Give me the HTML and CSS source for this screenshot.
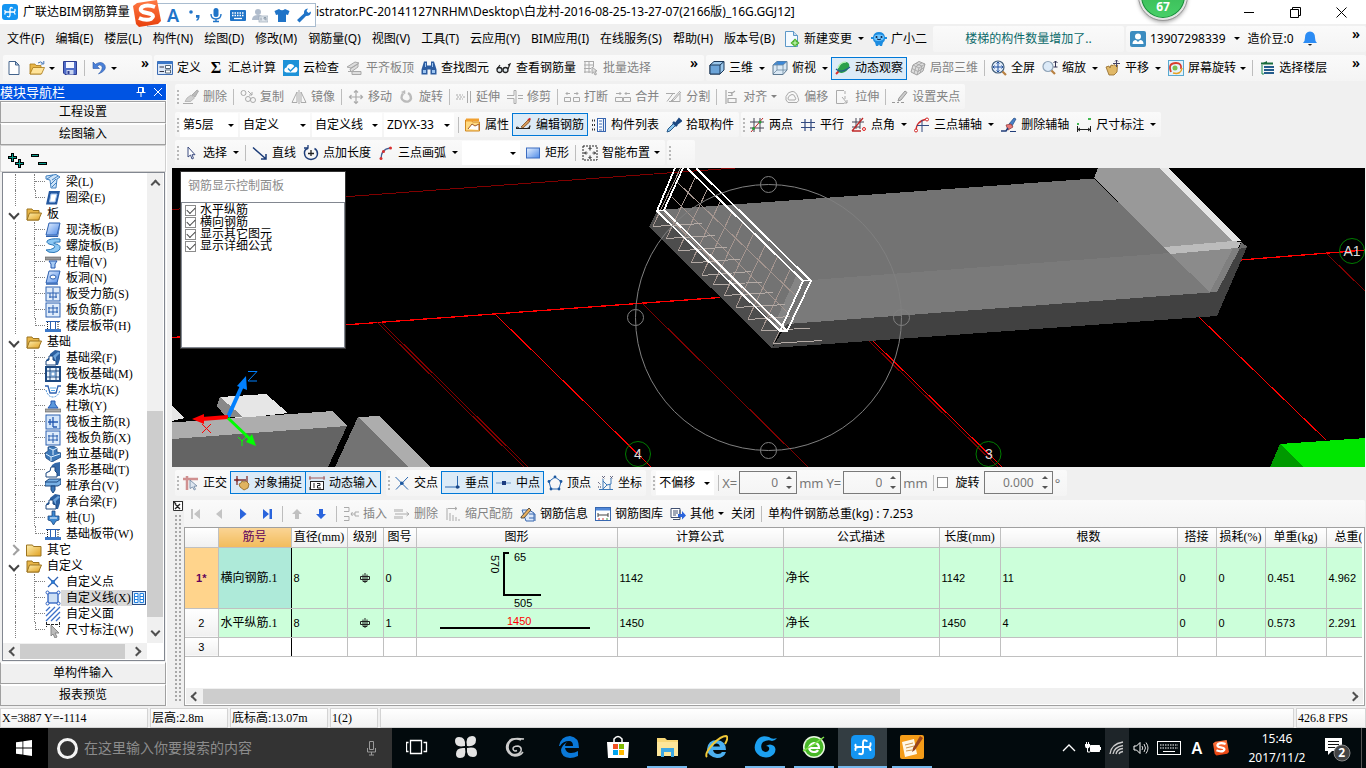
FILE: index.html
```html
<!DOCTYPE html>
<html lang="zh-CN">
<head>
    <meta charset="UTF-8">
    <meta name="viewport" content="width=device-width, initial-scale=1.0">
    <title>广联达BIM钢筋算量</title>
    <link rel="stylesheet" href="styles.css">
</head>
<body>
    <!-- icon sprite -->
    <svg class="sprite" aria-hidden="true">
        <defs>
            <linearGradient id="blueG" x1="0" y1="0" x2="1" y2="1"><stop offset="0" stop-color="#e8f2ff"/><stop offset="1" stop-color="#4d8ae8"/></linearGradient>
            <linearGradient id="goldG" x1="0" y1="0" x2="1" y2="1"><stop offset="0" stop-color="#fff0b0"/><stop offset="1" stop-color="#e0a020"/></linearGradient>
            <linearGradient id="sogouG" x1="0" y1="0" x2="0" y2="1"><stop offset="0" stop-color="#ff7a45"/><stop offset="1" stop-color="#e8400c"/></linearGradient>
        </defs>
        <symbol id="i-app" viewBox="0 0 16 16"><rect width="16" height="16" rx="3" fill="#1495f2"/><path d="M10.500 4Q8 2.500 8 5.500v5.500q0 2.500-2.500 1.500M3 10q-.5-2 2-2h6q2.500 0 2-2.500M3 6.500q-.5 1.500 1.500 1.500M13 10q-.3-2-2-2" fill="none" stroke="#fff" stroke-width="1.300" stroke-linecap="round"/></symbol>
        <symbol id="i-new" viewBox="0 0 16 16"><path d="M3 1.500h6.500L13 5v9.500H3z" fill="#fff" stroke="#44648c"/><path d="M9.500 1.500V5H13z" fill="#b8cce8" stroke="#44648c"/></symbol>
        <symbol id="i-open" viewBox="0 0 16 16"><path d="M1 4h5l1 1.500h5V14H1z" fill="#e8b648" stroke="#a87818" stroke-width=".8"/><path d="M4 7.500h11.500L12.500 14H1z" fill="#ffe49a" stroke="#a87818" stroke-width=".8"/><path d="M9 3q3-2.500 5 .5M14.800 1v3h-3" fill="none" stroke="#4878b8"/></symbol>
        <symbol id="i-save" viewBox="0 0 16 16"><path d="M1.500 1.500h13v13H3L1.500 13z" fill="#4f6cc8" stroke="#2c3c90"/><rect x="4" y="2" width="8" height="6" fill="#f4f6ff"/><rect x="4.500" y="10" width="7" height="4.500" fill="#c8d4f0"/><rect x="5.500" y="11" width="2" height="3" fill="#2c3c90"/></symbol>
        <symbol id="i-undo" viewBox="0 0 16 16"><path d="M2 2v6.500h6.500L6 6.200Q9 3.800 10.800 6 12.500 9 7.500 14 16 10.500 14 5.500 11 0 4.300 4.300z" fill="#4a80d8" stroke="#2858a8" stroke-width=".6"/></symbol>
        <symbol id="i-define" viewBox="0 0 16 16"><path d="M.5 1.500h15v13H.5z" fill="#dce8f8" stroke="#3c6cb4"/><path d="M.5 1.500h15v2.500H.5z" fill="#3c78c8"/><path d="M2.500 7H7M2.500 11.500H7" stroke="#334"/><path d="M8.500 5.500h5v3h-5zM8.500 10h5v3h-5z" fill="#fff" stroke="#567"/></symbol>
        <symbol id="i-cloud" viewBox="0 0 16 16"><rect width="16" height="16" fill="#1d92d8"/><path d="M3.500 12.500q-3-.5-2-3.500.5-1.500 2-1.500Q4.500 3.500 8 4q2.500 0 3.500 2.500 3.500 0 3 3.500-.5 2-2 2.500z" fill="#fff"/><path d="M5 8.500l2.500 2.500L13 5.500" fill="none" stroke="#1d92d8" stroke-width="1.500"/></symbol>
        <symbol id="i-slab" viewBox="0 0 16 16"><path d="M1 7l8-5 4 1-8 5zM4 9l8-5v3l-7 5z" fill="#ddd" stroke="#a8a8a8"/><path d="M2 11.500h13v3H6V12" fill="#ddd" stroke="#a8a8a8"/></symbol>
        <symbol id="i-find" viewBox="0 0 16 16"><path d="M3 1.500h3v4h4v-4h3l2.500 8v5h-6v-5h-3v5H.5v-5z" fill="#2c5ca0"/><path d="M2 10h3v3H2zM11 10h3v3h-3zM4 3h1v4H4zM11 3h1v4h-1z" fill="#9cc4f0"/></symbol>
        <symbol id="i-glasses" viewBox="0 0 16 16"><circle cx="3.500" cy="10" r="2.500" fill="#dfe8ee" stroke="#222" stroke-width="1.300"/><circle cx="9.500" cy="10" r="2.500" fill="#dfe8ee" stroke="#222" stroke-width="1.300"/><path d="M1 9l3-4M12 9l2-5-2 1" fill="none" stroke="#222" stroke-width="1.200"/></symbol>
        <symbol id="i-batch" viewBox="0 0 16 16"><path d="M1 1.500h10M1 5h10M1 8.500h7M1 12h7M2 1v12M6 1v12M10.500 1v6" stroke="#aaa" fill="none"/><path d="M9 7l5 4-2 .3 1.500 3-1.500.7-1.400-3L9 13.500z" fill="#ddd" stroke="#999" stroke-width=".8"/></symbol>
        <symbol id="i-cube" viewBox="0 0 16 16"><path d="M1 5l4-3.500h10V10l-4 4H1z" fill="#9cc8ec" stroke="#1c3858"/><path d="M1 5h10v9H1z" fill="#6ca4d8" stroke="#1c3858"/><path d="M11 5l4-3.500" stroke="#1c3858"/></symbol>
        <symbol id="i-cubetop" viewBox="0 0 16 16"><path d="M1 5l4-3.500h10V10l-4 4.500H1z" fill="#dbe9f5" stroke="#5c7890"/><path d="M1 5l4-3.500h10L11 5z" fill="#3c88d8"/><path d="M1 5h10v9.500M11 5l4-3.500M5 2v8l-4 4M5 10h10" fill="none" stroke="#6c88a0" stroke-width=".8"/></symbol>
        <symbol id="i-orbit" viewBox="0 0 16 16"><path d="M1 14L7 8" stroke="#d8302c" stroke-width="2"/><ellipse cx="8.500" cy="7.500" rx="6.500" ry="4.500" transform="rotate(-40 8.500 7.500)" fill="#2ca04c"/><path d="M3 8q2-6 8-6" fill="none" stroke="#b4f0b4" stroke-width="1.500"/><path d="M1 9q5 5 14-2" stroke="#245c8c" fill="none" stroke-width="1.200"/></symbol>
        <symbol id="i-rubik" viewBox="0 0 16 16"><path d="M3 5l6-3.500 6 2.500-2 7-6 4-6-3z" fill="#ddd" stroke="#a0a0a0"/><path d="M3 5l6 3 6-4M9 8l-2 7M2 8.500l6 3 6-4M6 3.500l6 2.700-2 7M12 2.800L6 6.500 4 13.500" fill="none" stroke="#a0a0a0" stroke-width=".8"/></symbol>
        <symbol id="i-full" viewBox="0 0 16 16"><circle cx="7" cy="7" r="6" fill="#e4eefa" stroke="#44607c" stroke-width="1.200"/><path d="M7 2v10M2 7h10M5.500 3.500L7 2l1.500 1.500M5.500 10.500L7 12l1.500-1.500M3.500 5.500L2 7l1.500 1.500M10.500 5.500L12 7l-1.500 1.500" stroke="#2050a0" fill="none"/><path d="M11.500 11.500l3.500 3.500" stroke="#b88040" stroke-width="2.200"/></symbol>
        <symbol id="i-zoom" viewBox="0 0 16 16"><circle cx="6" cy="6.500" r="5" fill="#dceaf8" stroke="#90a4b8" stroke-width="1.200"/><path d="M9.500 10.500L13 14" stroke="#b88040" stroke-width="2.200"/><path d="M13.500 1v6M11.500 3l2-2 2 2M11.500 7h4" stroke="#335" fill="none"/></symbol>
        <symbol id="i-pan" viewBox="0 0 16 16"><path d="M1 7l3-1 1 2 1-3 2 .5 1-1 1.500 1 2-.5L12 12l-3 3H4z" fill="#e0b868" stroke="#906828" stroke-width=".8"/><path d="M11.500 0v7M8 3.500h7M10 1.500L11.500 0 13 1.500" stroke="#446" fill="none"/></symbol>
        <symbol id="i-screen" viewBox="0 0 16 16"><rect x=".5" y=".5" width="15" height="15" fill="#e4f2fa" stroke="#58a8d0"/><path d="M3 12Q-.5 3 8 3q6 0 5 6" fill="none" stroke="#d83c2c" stroke-width="1.800"/><path d="M5 13q8 2 9-5" fill="none" stroke="#e8a020" stroke-width="1.500"/><circle cx="7" cy="8" r="2.500" fill="#78c050"/></symbol>
        <symbol id="i-floors" viewBox="0 0 16 16"><path d="M2 4l6-3v3z" fill="#1a6c3c"/><path d="M2 3.500h12" stroke="#1a6c3c" stroke-width="2"/><path d="M5 7h10M5 10h10M5 13h10" stroke="#245c8c" stroke-width="1.800"/><path d="M3 5v9h2" stroke="#1a8c4c" fill="none"/></symbol>
        <!-- edit strip, greyed -->
        <symbol id="i-del" viewBox="0 0 16 16"><path d="M9 6l5-5 1.500 1L12 8z" fill="#bbb" stroke="#999" stroke-width=".7"/><path d="M4 9l4-3 3.500 3-4 3.500H2z" fill="#d0d0d0" stroke="#aaa" stroke-width=".7"/><path d="M0 14.500h10" stroke="#aaa"/></symbol>
        <symbol id="i-copy" viewBox="0 0 16 16" fill="none" stroke="#aaa"><circle cx="3.500" cy="4" r="2.500"/><circle cx="8" cy="10" r="2.500"/><circle cx="13" cy="11" r="2.500"/><path d="M8 2l4 4M12 3v3H9"/></symbol>
        <symbol id="i-mirror" viewBox="0 0 16 16" fill="none" stroke="#aaa"><path d="M1 13.500L6 3v10.500zM15 13.500L10 3v10.500zM8 1v14"/></symbol>
        <symbol id="i-move" viewBox="0 0 16 16" fill="none" stroke="#aaa" stroke-width="1.200"><path d="M8 1.500v13M1.500 8h13M6 3.500l2-2 2 2M6 12.500l2 2 2-2M3.500 6l-2 2 2 2M12.500 6l2 2-2 2"/></symbol>
        <symbol id="i-rotate" viewBox="0 0 16 16" fill="none" stroke="#bbb" stroke-width="2.400"><path d="M4 4.500q-3.500 5 1 7.500 5.500 2 7-2.500 0-4-3-5.500"/><path d="M6 5V1.500L2.500 3z" fill="#bbb" stroke-width=".5"/></symbol>
        <symbol id="i-extend" viewBox="0 0 16 16" fill="none" stroke="#aaa"><path d="M0 6h7M0 10h7M1 8h9" stroke-dasharray="2 1"/><path d="M11.500 2v12M14.500 2v12"/></symbol>
        <symbol id="i-trim" viewBox="0 0 16 16" fill="none" stroke="#aaa"><path d="M0 6.500h7v-5h2v13H7v-5H0M11 6.500h5M11 9.500h5"/></symbol>
        <symbol id="i-break" viewBox="0 0 16 16" fill="none" stroke="#aaa"><path d="M2 4.500h4M10 4.500h4M3.500 3L2 4.500 3.500 6M12.500 3L14 4.500 12.500 6M.5 8.500h6v4h-6zM15.500 8.500h-6v4h6z"/></symbol>
        <symbol id="i-merge" viewBox="0 0 16 16" fill="none" stroke="#aaa"><path d="M1 4.500h5M10 4.500h5M4.500 3L6 4.500 4.500 6M11.500 3L10 4.500 11.500 6M.5 8.500h7v4h-7zM15.500 8.500h-7v4h7z"/></symbol>
        <symbol id="i-split" viewBox="0 0 16 16" fill="none" stroke="#aaa"><path d="M0 4.500h9M1 12.500l6-8M3 12.500h11v-8M14 2L7 10l-2 2 3-1 7-8"/></symbol>
        <symbol id="i-align" viewBox="0 0 16 16" fill="none" stroke="#aaa" stroke-width="1.200"><path d="M3 1v14M5 3.500h4v3H5M5 9.500h8v4H5zM12 2L8 5"/></symbol>
        <symbol id="i-offset" viewBox="0 0 16 16" fill="none" stroke="#aaa"><path d="M4 13.500h9q3-2 1-5Q12 2 8 2.500q-4 0-6 5-1 4 2 6z"/><path d="M5 11h6q1.500-1 0-3-1-3-3-2.500Q5 6 4 9q0 2 1 2z"/></symbol>
        <symbol id="i-stretch" viewBox="0 0 16 16" fill="none" stroke="#aaa"><path d="M9 1.500H1.500v13H9"/><path d="M10 2v3M10 7v3M7 8l5 6M12 11v3H9"/></symbol>
        <symbol id="i-grip" viewBox="0 0 16 16" fill="none" stroke="#999"><path d="M0 13.500h7M9 13.500h3" stroke-dasharray="3 2"/><path d="M7 9l6-7 2 1.500L9 11l-3 1z" fill="#ccc"/></symbol>
        <!-- component strip -->
        <symbol id="i-prop" viewBox="0 0 16 16"><path d="M.5 3h6l1 2h7v9H.5z" fill="#ffd980" stroke="#d08820"/><path d="M1 1.500h13v3H1z" fill="#f0a030"/><path d="M3 12l4-5 3 2 4-2v6" fill="#fff" stroke="#a05828"/></symbol>
        <symbol id="i-edit" viewBox="0 0 16 16"><path d="M0 11.500h14M0 11.500q1-3 3 0M11 11.500q3 0 3-3" fill="none" stroke="#222" stroke-width="1.200"/><path d="M5 10l7-7 2-.5-.5 2.500L7 11z" fill="#d49a5c" stroke="#704010" stroke-width=".7"/><path d="M12 3l2.500-1.500" stroke="#d02020" stroke-width="2"/></symbol>
        <symbol id="i-list" viewBox="0 0 16 16"><path d="M1 3.500h3M1 8h3M1 12.500h3" stroke="#333" stroke-width="2" stroke-dasharray="1 1"/><rect x="6.500" y="1.500" width="8" height="13" fill="#fff" stroke="#3866b0"/><path d="M8 4h3M8 7h3M8 10h3M8 13h3M12.500 2v12" stroke="#3866b0" stroke-width="1.200"/></symbol>
        <symbol id="i-pick" viewBox="0 0 16 16"><path d="M1 15l1-3 6-6 2 2-6 6z" fill="#8cc8f0" stroke="#285888"/><path d="M7 5l4 4" stroke="#1c4880" stroke-width="2.500"/><path d="M10 6l3-4 2 2-4 3z" fill="#245ca8" stroke="#1c4880" stroke-width="2"/></symbol>
        <symbol id="i-ax2" viewBox="0 0 16 16"><path d="M5 1v14M11 1v14M1 5h14M1 11h14" stroke="#445"/><path d="M2 15L14 1" stroke="#c02828"/><circle cx="4.500" cy="11.500" r="1.500" fill="#28a038"/><circle cx="11" cy="5" r="1.500" fill="#28a038"/></symbol>
        <symbol id="i-par" viewBox="0 0 16 16"><path d="M5 2v12M11 2v12M1 5.500h14M1 10.500h14" stroke="#334a80" stroke-width="1.200"/></symbol>
        <symbol id="i-angle" viewBox="0 0 16 16"><path d="M5 1v11M9 1v11M1 5h12M1 10h8" stroke="#445"/><path d="M1 14L12 1M1 14h9" stroke="#c02828" stroke-width="1.300"/><circle cx="13" cy="12" r="1.500" fill="none" stroke="#e02020"/></symbol>
        <symbol id="i-arc3" viewBox="0 0 16 16"><path d="M2 14Q2 4 13 2" fill="none" stroke="#d02828" stroke-width="1.300"/><path d="M8 3v12M3 8.500h12" stroke="#334a80"/><circle cx="2" cy="13.500" r="1.500" fill="#fff" stroke="#d02828"/><circle cx="13" cy="2.500" r="1.500" fill="#fff" stroke="#d02828"/></symbol>
        <symbol id="i-delax" viewBox="0 0 16 16"><path d="M8 7l5-6 2 1-4 7z" fill="#4880c8" stroke="#204880" stroke-width=".7"/><path d="M5 8l5-1 2 3-5 3z" fill="#e87878" stroke="#883030" stroke-width=".7"/><path d="M0 14h5l2-3" stroke="#203c78" fill="none" stroke-width="1.600"/><path d="M9 14.500h6" stroke="#203c78"/></symbol>
        <symbol id="i-dim" viewBox="0 0 16 16"><path d="M1.500 9v6M14.500 9v6M2 12.500h12M4 11l-2 1.500L4 14M12 11l2 1.500L12 14" stroke="#222" fill="none"/><path d="M1 6h2v2H1zM12 1h3v2h-3z" fill="#40b850"/></symbol>
        <!-- draw strip -->
        <symbol id="i-arrow" viewBox="0 0 16 16"><path d="M5 2v10l2.500-2 1.500 4 1.500-.7-1.500-3.600H12z" fill="#fff" stroke="#3c4c80"/></symbol>
        <symbol id="i-line" viewBox="0 0 16 16"><path d="M1 2.500l12.500 11M14 9v5H9" fill="none" stroke="#1c3c78" stroke-width="1.500"/></symbol>
        <symbol id="i-ptlen" viewBox="0 0 16 16"><path d="M5 3.500q-4 1-3.500 5Q2 14 8 14.500q6-.5 6.500-5.500 0-4-3-5.500" fill="none" stroke="#1c3c78" stroke-width="1.500"/><path d="M8 5v6M5 8.500h6" stroke="#222" stroke-width="1.300"/><path d="M1 3h4V0" fill="none" stroke="#1c3c78" stroke-width="1.300"/></symbol>
        <symbol id="i-arc" viewBox="0 0 16 16"><path d="M3 14Q3 4 12 3" fill="none" stroke="#445c90" stroke-width="1.300"/><circle cx="3" cy="13.500" r="1.500" fill="#d83030"/><circle cx="5.500" cy="6.500" r="1.500" fill="#d83030"/><circle cx="12.500" cy="3" r="1.500" fill="#d83030"/></symbol>
        <symbol id="i-rect" viewBox="0 0 16 16"><rect x="1.500" y="3" width="13" height="10" fill="url(#blueG)" stroke="#3c6cc0"/></symbol>
        <symbol id="i-smart" viewBox="0 0 16 16" fill="none" stroke="#222"><rect x="1" y="1" width="14" height="14" stroke-dasharray="2 1"/><path d="M8 2.500v3M8 10.500v3M2.500 8h3M10.500 8h3M6.500 4L8 2.500 9.500 4M6.500 12L8 13.500 9.500 12M4 6.500L2.500 8 4 9.500M12 6.500L13.500 8 12 9.500"/></symbol>
        <!-- snap strip -->
        <symbol id="i-ortho" viewBox="0 0 16 16"><path d="M0 4h15M4 1v14" stroke="#d09090" stroke-width="2.500"/><path d="M7 5l7 6-3 .3 1.500 3-1.300.7-1.500-3L7 13.500z" fill="#dde6f0" stroke="#68809c" stroke-width=".8"/></symbol>
        <symbol id="i-osnap" viewBox="0 0 16 16"><path d="M0 5h12M3 1v9M13 1v9" stroke="#803030" stroke-width="1.300"/><circle cx="3" cy="5" r="1.500" fill="#803030"/><path d="M5 9l2-1 1-2 2 1 2-1 3 3-1 4-4 2-4-3z" fill="#e0b460" stroke="#8c6420" stroke-width=".8"/></symbol>
        <symbol id="i-dyn" viewBox="0 0 16 16"><path d="M0 3h16M1 1v4M15 1v4" stroke="#a05858"/><rect x="1.500" y="6.500" width="13" height="8" fill="#fff" stroke="#222"/><path d="M5 8v5M8 8.500h3v2H8.500V13H12M0 12v3" stroke="#222" fill="none"/></symbol>
        <symbol id="i-cross" viewBox="0 0 16 16"><path d="M1.500 2L14 14.500M14 2L2 14.500" stroke="#2c68b0"/><circle cx="7.800" cy="8.200" r="1.800" fill="#1c58a0"/></symbol>
        <symbol id="i-perp" viewBox="0 0 16 16"><path d="M0 12h15M12.500 1v11" stroke="#2c68b0"/><circle cx="12.500" cy="12" r="1.800" fill="#1c4888"/></symbol>
        <symbol id="i-mid" viewBox="0 0 16 16"><path d="M0 8h15" stroke="#6c98c8"/><rect x="6" y="6" width="4" height="4" fill="#1c3c80"/></symbol>
        <symbol id="i-vert" viewBox="0 0 16 16"><path d="M8 2l6 4.500-2 7.500H4L2 6.500z" fill="none" stroke="#2c68b0"/><g fill="#1c58a0"><circle cx="8" cy="2" r="1.400"/><circle cx="14" cy="6.500" r="1.400"/><circle cx="12" cy="14" r="1.400"/><circle cx="4" cy="14" r="1.400"/><circle cx="2" cy="6.500" r="1.400"/></g></symbol>
        <symbol id="i-coord" viewBox="0 0 16 16"><path d="M1 14.500h14M5 4v11M5 6l4 4 4-1V3M5 14l4-4M12 9v6" stroke="#3c78b8" fill="none"/><path d="M4 1l3 3M7 1L4 4M12 1l3 3M15 1l-3 3M0 7l3 3M0 12h3" stroke="#335" stroke-dasharray="1 1"/></symbol>
        <!-- rebar strip -->
        <symbol id="i-first" viewBox="0 0 16 16"><path d="M4 3h2v10H4zM13 3v10L7 8z" fill="#c4c4c4"/></symbol>
        <symbol id="i-prev" viewBox="0 0 16 16"><path d="M11 3v10L5 8z" fill="#c4c4c4"/></symbol>
        <symbol id="i-next" viewBox="0 0 16 16"><path d="M5 2.500v11L11.500 8z" fill="#2a64dc"/></symbol>
        <symbol id="i-last" viewBox="0 0 16 16"><path d="M10.500 3h2.500v10h-2.500zM4 3v10l6-5z" fill="#2a64dc"/></symbol>
        <symbol id="i-up" viewBox="0 0 16 16"><path d="M8 3l5 5h-3v5H6V8H3z" fill="#c0c0c0"/></symbol>
        <symbol id="i-down" viewBox="0 0 16 16"><path d="M8 13L3 8h3V3h4v5h3z" fill="#2a64dc"/></symbol>
        <symbol id="i-ins" viewBox="0 0 16 16"><path d="M1 1.500h5v4H1M1 10.500h5v4H1M8 8h4M9.500 6L8 8l1.500 2M16 6h-4v4h4" fill="none" stroke="#aaa"/></symbol>
        <symbol id="i-rowdel" viewBox="0 0 16 16"><path d="M0 3h9v3H0zM0 10h9v3H0z" fill="#d0d0d0"/><path d="M1 8h14M12.500 6L15 8l-2.500 2" stroke="#aaa" fill="none"/></symbol>
        <symbol id="i-scale" viewBox="0 0 16 16"><path d="M2 2v12M3 2.500h9M10 1l2 1.500L10 4M5 7v8M8 9v6M11 11v4M14 13v2" stroke="#aaa" fill="none"/></symbol>
        <symbol id="i-info" viewBox="0 0 16 16"><path d="M2 4h7l5 3v8H6z" fill="#dce8fa" stroke="#3868b0"/><path d="M1 11l8-9 2 2-7 8H1z" fill="#e8b060" stroke="#333" stroke-width=".8"/><path d="M9 8h6v7M9 12h5" stroke="#3868b0" fill="none"/></symbol>
        <symbol id="i-lib" viewBox="0 0 16 16"><rect x=".5" y="1.500" width="15" height="13" fill="#fff" stroke="#3868b0"/><path d="M1 2h14v2.500H1z" fill="#5088d8"/><path d="M3 7v4M3 9h10M13 7v4" stroke="#444"/><path d="M3 13h2M7 13h2" stroke="#d84040"/><path d="M11 13h2" stroke="#40a040"/></symbol>
        <symbol id="i-other" viewBox="0 0 16 16"><path d="M1 2.500h9v9H1zM3 5h5M3 7h5M3 9h3M3 13.500h7V4" fill="#fff" stroke="#405070"/><path d="M8 8h4V5l4 4.500-4 4V11H8z" fill="#2a64dc"/></symbol>
        <!-- menu extras -->
        <symbol id="i-newchg" viewBox="0 0 16 16"><path d="M1.500.5h8l4 4v11h-12z" fill="#f4faff" stroke="#5c98c8"/><path d="M9.500.5v4h4" fill="#cde" stroke="#5c98c8"/><path d="M11 7.500l4.500 4.500-4.500 4L6.500 12z" fill="#48b028"/><path d="M11 9.500v5M8.500 12h5" stroke="#d8ffc8"/></symbol>
        <symbol id="i-robot" viewBox="0 0 16 16"><path d="M0 6h2q1-5 6-5t6 5h2v2h-2q0 2-2 3.500l-1 3.500H9L8 13.500 7 15H5l-1-3.500Q2 10 2 8H0z" fill="#1c8ce0"/><path d="M3 6.500q0-3 5-3t5 3-5 3.500-5-3.500z" fill="#6cc4ff"/><circle cx="5.500" cy="6" r="1" fill="#124"/><circle cx="10.500" cy="6" r="1" fill="#124"/><path d="M6 8q2 1.500 4 0" stroke="#124" fill="none"/></symbol>
        <symbol id="i-user" viewBox="0 0 16 16"><rect width="16" height="16" rx="2" fill="#3c8cc0"/><circle cx="8" cy="5.500" r="3" fill="#fff"/><path d="M2.500 13q0-4 3.500-4l2 2 2-2q3.500 0 3.500 4z" fill="#fff"/></symbol>
        <symbol id="i-bell" viewBox="0 0 16 16"><path d="M8 .5q5 .5 5 6 0 4 2 5.500H1Q3 10.500 3 6.500 3 1 8 .5z" fill="#2c8cf4"/><path d="M6 13h4q-2 3-4 0z" fill="#222"/></symbol>
        <symbol id="i-sogou" viewBox="0 0 28 28"><path d="M4 3l20-3 4 21-3 3-19 3-3-3L0 6z" fill="url(#sogouG)"/><path d="M22 7q-8-3-13 0-3 3 1 5l8 2q4 2 0 5-5 2-12-1" fill="none" stroke="#fff" stroke-width="4"/></symbol>
        <symbol id="i-comma" viewBox="0 0 16 16"><circle cx="5" cy="5" r="1.800" fill="#2074c8"/><path d="M10 8h3.500v2.500q-.5 3-3 3.500v-1.500q1.200-.5 1.200-1.800H10z" fill="#2074c8"/></symbol>
        <symbol id="i-mic" viewBox="0 0 16 16"><rect x="5.500" y="1" width="5" height="9" rx="2.500" fill="#2074c8"/><path d="M3 7q0 5 5 5t5-5M8 12v2.500M5 14.500h6" fill="none" stroke="#2074c8" stroke-width="1.400"/></symbol>
        <symbol id="i-kbd" viewBox="0 0 16 16"><rect y="3" width="16" height="11" rx="1" fill="#2074c8"/><path d="M2 6h12M2 8.500h12" stroke="#fff" stroke-width="1.300" stroke-dasharray="1.500 1"/><path d="M4 11.500h8" stroke="#fff" stroke-width="1.300"/></symbol>
        <symbol id="i-id" viewBox="0 0 16 16"><circle cx="6" cy="5" r="3" fill="#b0bccc"/><path d="M0 13q0-5 6-5 3 0 4 1v4z" fill="#b0bccc"/><rect x="7" y="9" width="9" height="6" fill="#dfe5ec" stroke="#9aa8b8" stroke-width=".7"/><path d="M9 10.500v3M12 10.500h2v3M12 10.500v1.500h2" stroke="#8090a0" fill="none" stroke-width=".8"/></symbol>
        <symbol id="i-shirt" viewBox="0 0 16 16"><path d="M5 2q3 2.500 6 0l4.500 2-1.500 4-2-.5V15H4V7.500L2 8 .5 4z" fill="#2074c8"/></symbol>
        <symbol id="i-wrench" viewBox="0 0 16 16"><path d="M1 13l7-6.500Q7.500 2 12 1.500L10.500 4l2 2 2.500-1.500q0 4.500-5 4.500L3.500 15.500z" fill="#2074c8"/></symbol>
        <!-- tree icons -->
        <symbol id="t-open" viewBox="0 0 16 16"><path d="M1 3h5l1 1.500h6V14H1z" fill="#e8b648" stroke="#9c7420"/><path d="M3.500 7h12L12.500 14H1z" fill="url(#goldG)" stroke="#9c7420"/></symbol>
        <symbol id="t-shut" viewBox="0 0 16 16"><path d="M.5 3h6l1 1.500h7.500V14H.5z" fill="url(#goldG)" stroke="#9c7420"/></symbol>
        <symbol id="t-beam" viewBox="0 0 16 16"><path d="M1 2l10-1.500L15 3l-3 2-1 9H6L5 6 1 5z" fill="#cfe4f8" stroke="#4080c0"/><path d="M2 5l6-4M6 10l5-5M7 13l4-4M7 6l6-4" stroke="#4080c0"/></symbol>
        <symbol id="t-ring" viewBox="0 0 16 16"><path d="M4 1h11l-3 13.500H1z" fill="#2458a0"/><path d="M6 4h6l-2 8H4.500z" fill="#fff" stroke="#9cc0f0"/></symbol>
        <symbol id="t-slab" viewBox="0 0 16 16"><path d="M4 1h11l-3 12H1z" fill="url(#blueG)" stroke="#2c60b0"/><path d="M1 13.500h11.500L15 2v2l-2 11H1z" fill="#2c60b0"/></symbol>
        <symbol id="t-spiral" viewBox="0 0 16 16"><path d="M15 1Q5 0 2 3q-1 3 6 4 3 1 1 3-3 2-8 2 2 3 8 2.500 7-1.500 6-6-1-2.500-6-3Q7 4 15 4z" fill="#8cc8f4" stroke="#2c78b8"/></symbol>
        <symbol id="t-cap" viewBox="0 0 16 16"><path d="M0 3h16v3H0z" fill="#999" stroke="#555" stroke-width=".6"/><path d="M4 7h8l-2 3v4H6v-4z" fill="#a8ccf4" stroke="#2458b0"/></symbol>
        <symbol id="t-hole" viewBox="0 0 16 16"><path d="M4 1h11l-3 12H1z" fill="url(#blueG)" stroke="#2c60b0"/><path d="M1 14h12" stroke="#2c60b0" stroke-width="1.500"/><ellipse cx="8" cy="7" rx="3" ry="2" fill="#fff" stroke="#2c60b0"/></symbol>
        <symbol id="t-bar1" viewBox="0 0 16 16"><rect x="1" y="1" width="14" height="14" fill="#e0ecfa" stroke="#2c60b0"/><path d="M8 2v12M2 7h12M5 7v5M11 7v5M4 11h8" stroke="#2c60b0"/></symbol>
        <symbol id="t-bar2" viewBox="0 0 16 16"><rect x="1" y="1" width="14" height="14" fill="#e0ecfa" stroke="#2c60b0"/><path d="M8 3v10M3 6h10M3 10h10M4 5v6M12 5v6" stroke="#2c60b0"/></symbol>
        <symbol id="t-band" viewBox="0 0 16 16"><rect y="11" width="16" height="3" fill="#3c78c8"/><path d="M1 3.500h14M5.500 4v7M10.500 4v7" stroke="#2c60b0"/><path d="M2.500 4v7M13 4v7" stroke="#222" stroke-dasharray="1 1"/></symbol>
        <symbol id="t-fbeam" viewBox="0 0 16 16"><path d="M1 10l4-3V4l5-4 5 1v8l-2 6H1z" fill="#2c60a0"/><path d="M1 15v-4l3-1V6h4v4l3 1v4z" fill="#fff" stroke="#1c4880"/><path d="M8 6l5-4 2 1-4 4v4z" fill="#6ca4dc"/></symbol>
        <symbol id="t-raft" viewBox="0 0 16 16"><rect x="1" y="1" width="14" height="14" fill="#e8f2fa" stroke="#1c4880" stroke-width="2"/><path d="M5 1v14M11 1v14M1 5h14M1 11h14" stroke="#1c4880"/><rect x="6" y="6" width="4" height="4" fill="#fff" stroke="#5890c8"/></symbol>
        <symbol id="t-pit" viewBox="0 0 16 16"><path d="M0 4h3l2 7h6l2-7h3" fill="none" stroke="#2c60b0" stroke-width="1.300"/><path d="M1 8q2 7 7 7t7-7" fill="none" stroke="#4890d8" stroke-dasharray="2 1"/><path d="M5 6h6M6 8.500h4" stroke="#5cace8"/></symbol>
        <symbol id="t-pier" viewBox="0 0 16 16"><path d="M0 11h16v3H0z" fill="#aaa" stroke="#555" stroke-width=".6"/><path d="M6 3h4v3l3 4H3l3-4z" fill="#5c98dc" stroke="#2458b0"/></symbol>
        <symbol id="t-bar3" viewBox="0 0 16 16"><rect x="1" y="1" width="14" height="14" fill="#d4e6fa" stroke="#2c60b0"/><path d="M8 3v10M3 8h10M5 5v6M8 13h4" stroke="#2458b0" stroke-width="1.300"/></symbol>
        <symbol id="t-iso" viewBox="0 0 16 16"><path d="M0 7l3-2V1l5-1 4 2v4l4 1v4l-9 5-6-4z" fill="#3c78b8" stroke="#1c4880" stroke-width=".8"/><path d="M1 8l5 3 9-3M6 11v4M4 2l4 2 4-2M8 4v5" fill="none" stroke="#dff0ff"/></symbol>
        <symbol id="t-strip" viewBox="0 0 16 16"><path d="M1 14l1-4 3-1 2-6 3-2 5-1v14z" fill="#3468a8"/><path d="M1 15v-4l4-2 1-4h4v4l2 2v4z" fill="#fff" stroke="#1c4880"/></symbol>
        <symbol id="t-pcap" viewBox="0 0 16 16"><path d="M0 4l4-3h12v5l-3 2H0z" fill="#78b0e4" stroke="#1c4880"/><path d="M0 4h12l4-3" fill="none" stroke="#1c4880"/><path d="M6 8h4v4l-2 3-2-3z" fill="#3c78b8" stroke="#1c4880"/></symbol>
        <symbol id="t-pile" viewBox="0 0 16 16"><path d="M7 1h3v5h4v4l-3 1-2.500 4L6 11l-3-1V6h4z" fill="#3c88d0" stroke="#1c4880" stroke-width=".8"/><path d="M5 8h7" stroke="#fff"/></symbol>
        <symbol id="t-pt" viewBox="0 0 16 16"><path d="M3 3l10 10M13 3L3 13" stroke="#2c60b0" stroke-width="1.300"/><circle cx="8" cy="8" r="2" fill="#2c78d0"/></symbol>
        <symbol id="t-line" viewBox="0 0 16 16"><rect x="3" y="3" width="10" height="10" fill="#cfe0f4" stroke="#2c60c0" stroke-width="1.300"/><g fill="#fff" stroke="#2c60c0"><circle cx="2.500" cy="2.500" r="1.500"/><circle cx="13.500" cy="2.500" r="1.500"/><circle cx="2.500" cy="13.500" r="1.500"/><circle cx="13.500" cy="13.500" r="1.500"/></g></symbol>
        <symbol id="t-face" viewBox="0 0 16 16"><path d="M1 5l4-4M1 10L10 1M1 15L15 1M6 15l9-9M11 15l4-4" stroke="#3c70c8" stroke-width="1.300" fill="none"/></symbol>
        <symbol id="t-dim" viewBox="0 0 16 16"><path d="M1.500 0v5M14.500 0v5M2 2.500h12" stroke="#222" stroke-dasharray="3 1"/><path d="M6 3v11l2-2 2 4 2-1-2-4h4z" fill="#bbb" stroke="#888"/></symbol>
        <symbol id="t-tag" viewBox="0 0 14 16"><rect x=".5" y="1.500" width="13" height="13" fill="#d8ecff" stroke="#2c4c80"/><path d="M2.500 3.500h3.500v9H2.500zM8 3.500h3.500v9H8zM2.500 6.500H6M2.500 9.500H6M8 6.500h3.500M8 9.500h3.500" fill="#fff" stroke="#2080e0"/></symbol>
        <!-- taskbar icons -->
        <symbol id="w-win" viewBox="0 0 16 16"><path d="M0 2.300l6.500-.9v6.200H0zM7.300 1.300L16 0v7.600H7.300zM0 8.400h6.500v6.200L0 13.700zM7.300 8.400H16V16l-8.700-1.300z" fill="#fff"/></symbol>
        <symbol id="w-view" viewBox="0 0 22 16"><path d="M4.500 1.500h11v13h-11zM2.500 3.500h-2v9h2M17.500 3.500h3v9h-3" fill="none" stroke="#fff" stroke-width="1.300"/></symbol>
        <symbol id="w-fan" viewBox="0 0 24 24" fill="#e4e4e4"><path d="M11 11Q1 13 1 6q0-4 4-4 7 0 6 9zM13 11Q11 1 18 1q4 0 4 4 0 7-9 6zM13 13q10-2 10 5 0 4-4 4-7 0-6-9zM11 13q2 10-5 10-4 0-4-4 0-7 9-6z"/></symbol>
        <symbol id="w-gg" viewBox="0 0 24 24"><path d="M18 5Q10 2 6 8q-3 7 3 11 6 2 9-3 1-4-3-5-5 0-5 3 1 3 4 1.500M21 4q-7-1-12 0Q2 8 4 15q2 5 8 6 5 0 8-4" fill="none" stroke="#ccc" stroke-width="1.500"/></symbol>
        <symbol id="w-edge" viewBox="0 0 24 24"><path d="M2 11Q4 1 13 1q9 1 9 12H8q1 5 6 5 4 0 7-2v5q-4 2-8 2-9-1-9-8 1-5 6-8-2 2-2 4h8q0-5-4-5-6 0-9 5z" fill="#0a78d8"/></symbol>
        <symbol id="w-store" viewBox="0 0 24 24"><path d="M8 7V4q4-5 8 0v3" fill="none" stroke="#fff" stroke-width="1.500"/><path d="M1 7h22l-1 16H2z" fill="#fff"/><path d="M7 9h5v5H7z" fill="#f25022"/><path d="M13 9h5v5h-5z" fill="#7fba00"/><path d="M7 15h5v5H7z" fill="#00a4ef"/><path d="M13 15h5v5h-5z" fill="#ffb900"/></symbol>
        <symbol id="w-exp" viewBox="0 0 24 24"><path d="M2 3h8l2 2h11v16H2z" fill="#f8d878"/><path d="M2 7h21v14H2z" fill="#fde69a"/><path d="M6 13h13v9h-3v-5H9v5H6z" fill="#3ca8e4"/></symbol>
        <symbol id="w-ie" viewBox="0 0 24 24"><path d="M3 14Q4 5 13 5q9 1 9 10H9q1 4 5 4 3 0 4-2h4q-2 6-9 6-9-1-10-9zm6-2.500h7q-1-3-3.500-3T9 11.500z" fill="#4cb0f0"/><path d="M3 22Q0 19 9 9q8-8 13-8 3 1-1 8" fill="none" stroke="#f0c838" stroke-width="2"/></symbol>
        <symbol id="w-g" viewBox="0 0 24 24"><path d="M24 3q-5 2-8-1Q7-1 3 7q-4 9 4 14 8 4 14-2 3-5 0-8-4-3-8 0 4 0 3 4-3 4-7 0-2-5 1-8 5-3 9-1 3 0 5-3z" fill="#1ca0f0"/></symbol>
        <symbol id="w-360" viewBox="0 0 24 24"><circle cx="12" cy="12" r="11" fill="#e8f8e0"/><circle cx="12" cy="12" r="9.500" fill="#48b828"/><path d="M7 13h10q0-5-5-5-4 1-5 5 1 4 5 4 3 0 4-2" fill="none" stroke="#fff" stroke-width="2.200"/><path d="M1 16Q12 10 22 2" stroke="#7ce048" stroke-width="1.500" fill="none"/></symbol>
        <symbol id="w-note" viewBox="0 0 24 24"><rect width="24" height="24" rx="2" fill="#f49c18"/><path d="M2 7l12-3 3 15-12 3z" fill="#fff8e8"/><path d="M5 10l8-2M6 13l8-2M6 16l6-1" stroke="#d09850"/><path d="M20 1l-7 12-1 4 3-2 8-12z" fill="#98441c"/></symbol>
        <symbol id="w-batt" viewBox="0 0 16 16"><path d="M5.500 5.500h9v6h-9z" fill="#fff" stroke="#fff"/><path d="M15 7h1v3h-1zM0 4h5v2.500q-1 2-2.500 2Q0 8 0 6zM1 2h1v2H1zM3 2h1v2H3z" fill="#fff"/><path d="M2.500 8v4H5" stroke="#fff" fill="none"/></symbol>
        <symbol id="w-wifi" viewBox="0 0 16 16" fill="none" stroke="#ccc" stroke-width="1.300"><path d="M1 14Q2 4 14 2M4 14Q5 7 14 5.500M7 14q1-5 7-5.500M10 14q.5-2 4-2.500"/></symbol>
        <symbol id="w-vol" viewBox="0 0 16 16"><path d="M1 6h2.500L7 2.500v11L3.500 10H1z" fill="none" stroke="#fff"/><path d="M9 6q1.500 2 0 4M11 4q3 4 0 8M13 2.500q4 5.500 0 11" fill="none" stroke="#ddd"/></symbol>
        <symbol id="w-kbd" viewBox="0 0 24 14"><rect x=".5" y=".5" width="23" height="13" fill="none" stroke="#fff"/><path d="M3 4h18M3 7h18" stroke="#fff" stroke-dasharray="1.500 1"/><path d="M6 10.500h12" stroke="#fff"/></symbol>
        <symbol id="w-msg" viewBox="0 0 28 28"><path d="M2 4h17v13H9l-4 4v-4H2z" fill="#fff"/><path d="M5 7.500h11M5 10.500h11M5 13.500h7" stroke="#111"/><circle cx="19" cy="19" r="8" fill="#444" stroke="#888"/></symbol>
    </svg>

    <!-- title bar -->
    <header class="title-bar">
        <svg class="ico"><use href="#i-app"/></svg>
        <span class="title-app">广联达BIM钢筋算量</span>
        <div class="ime-bar">
            <svg class="ime-logo"><use href="#i-sogou"/></svg>
            <button class="ime-a">A</button>
            <svg class="ico"><use href="#i-comma"/></svg>
            <svg class="ico"><use href="#i-mic"/></svg>
            <svg class="ico"><use href="#i-kbd"/></svg>
            <svg class="ico"><use href="#i-id"/></svg>
            <svg class="ico"><use href="#i-shirt"/></svg>
            <svg class="ico"><use href="#i-wrench"/></svg>
        </div>
        <span class="title-path">istrator.PC-20141127NRHM\Desktop\白龙村-2016-08-25-13-27-07(2166版)_16G.GGJ12]</span>
        <div class="window-buttons">
            <button aria-label="最小化"><svg class="win-ico" viewBox="0 0 11 11"><path d="M0 5.500h10" stroke="#000"/></svg></button>
            <button aria-label="还原"><svg class="win-ico" viewBox="0 0 11 11"><path d="M.5 2.500h8v8h-8zM2.500 2.500v-2h8v8h-2" fill="none" stroke="#000"/></svg></button>
            <button aria-label="关闭"><svg class="win-ico" viewBox="0 0 11 11"><path d="M.5.5l10 10M10.500.5l-10 10" stroke="#000"/></svg></button>
        </div>
        <div class="speed-ball">67</div>
    </header>

    <nav class="menu-bar">
        <div class="menus">
            <button>文件(F)</button><button>编辑(E)</button><button>楼层(L)</button><button>构件(N)</button><button>绘图(D)</button><button>修改(M)</button><button>钢筋量(Q)</button><button>视图(V)</button><button>工具(T)</button><button>云应用(Y)</button><button>BIM应用(I)</button><button>在线服务(S)</button><button>帮助(H)</button><button>版本号(B)</button>
        </div>
        <button class="tool"><svg class="ico"><use href="#i-newchg"/></svg>新建变更<i class="caret wide"></i></button>
        <button class="tool"><svg class="ico"><use href="#i-robot"/></svg>广小二</button>
        <a class="strip news" href="#">楼梯的构件数量增加了..</a>
        <div class="strip account">
            <button class="tool"><svg class="ico"><use href="#i-user"/></svg>13907298339<i class="caret"></i></button>
            <button class="tool coin">造价豆:0</button>
            <svg class="ico"><use href="#i-bell"/></svg>
            <button class="more">»</button>
        </div>
    </nav>

    <div class="top-tools">
        <div class="strip file-tools">
            <button class="tool" aria-label="新建"><svg class="ico"><use href="#i-new"/></svg></button>
            <button class="tool" aria-label="打开"><svg class="ico"><use href="#i-open"/></svg><i class="caret"></i></button>
            <button class="tool" aria-label="保存"><svg class="ico"><use href="#i-save"/></svg></button>
            <i class="sep"></i>
            <button class="tool" aria-label="撤销"><svg class="ico"><use href="#i-undo"/></svg><i class="caret"></i></button>
            <button class="more">»</button>
        </div>
        <div class="strip calc-tools">
            <button class="tool"><svg class="ico"><use href="#i-define"/></svg>定义</button>
            <button class="tool"><b class="ico sigma">Σ</b>汇总计算</button>
            <button class="tool"><svg class="ico"><use href="#i-cloud"/></svg>云检查</button>
            <button class="tool off"><svg class="ico"><use href="#i-slab"/></svg>平齐板顶</button>
            <button class="tool"><svg class="ico"><use href="#i-find"/></svg>查找图元</button>
            <button class="tool"><svg class="ico"><use href="#i-glasses"/></svg>查看钢筋量</button>
            <button class="tool off"><svg class="ico"><use href="#i-batch"/></svg>批量选择</button>
            <button class="more">»</button>
        </div>
        <div class="strip view-tools">
            <button class="tool"><svg class="ico"><use href="#i-cube"/></svg>三维<i class="caret wide"></i></button>
            <button class="tool"><svg class="ico"><use href="#i-cubetop"/></svg>俯视<i class="caret wide"></i></button>
            <button class="tool on"><svg class="ico"><use href="#i-orbit"/></svg>动态观察</button>
            <button class="tool off"><svg class="ico"><use href="#i-rubik"/></svg>局部三维</button>
            <i class="sep"></i>
            <button class="tool"><svg class="ico"><use href="#i-full"/></svg>全屏</button>
            <button class="tool"><svg class="ico"><use href="#i-zoom"/></svg>缩放<i class="caret wide"></i></button>
            <button class="tool"><svg class="ico"><use href="#i-pan"/></svg>平移<i class="caret wide"></i></button>
            <button class="tool"><svg class="ico"><use href="#i-screen"/></svg>屏幕旋转<i class="caret"></i></button>
            <i class="sep"></i>
            <button class="tool"><svg class="ico"><use href="#i-floors"/></svg>选择楼层</button>
            <button class="more">»</button>
        </div>
    </div>

    <div class="main">
        <aside class="sidebar">
            <div class="side-title">模块导航栏
                <svg class="pin" viewBox="0 0 12 12"><path d="M3.500 1.500h5v5h-5zM7.500 1v6M1.500 6.500h9M6 7v4" fill="none" stroke="#fff"/></svg>
                <svg class="pin" viewBox="0 0 12 12"><path d="M2 2l8 8M10 2l-8 8" stroke="#fff"/></svg>
            </div>
            <button class="side-btn">工程设置</button>
            <button class="side-btn">绘图输入</button>
            <div class="tree-tools">
                <svg viewBox="0 0 40 16"><path d="M1 5.500h9M5.500 1v9M8 11.500h9M12.500 7v9M24 3.500h8M31 11.500h9" stroke="#000" stroke-width="3"/><path d="M2 5.500h7M5.500 2v7M9 11.500h7M12.500 8v7M25 3.500h6M32 11.500h7" stroke="#0a9c8c"/></svg>
            </div>
            <div class="tree-box">
                <div class="tree-view">
                    <ul class="tree">
                        <li class="leaf"><svg class="ico"><use href="#t-beam"/></svg><button>梁(L)</button></li>
                        <li class="leaf last"><svg class="ico"><use href="#t-ring"/></svg><button>圈梁(E)</button></li>
                        <li class="branch open"><svg class="ico"><use href="#t-open"/></svg><button>板</button></li>
                        <li class="leaf"><svg class="ico"><use href="#t-slab"/></svg><button>现浇板(B)</button></li>
                        <li class="leaf"><svg class="ico"><use href="#t-spiral"/></svg><button>螺旋板(B)</button></li>
                        <li class="leaf"><svg class="ico"><use href="#t-cap"/></svg><button>柱帽(V)</button></li>
                        <li class="leaf"><svg class="ico"><use href="#t-hole"/></svg><button>板洞(N)</button></li>
                        <li class="leaf"><svg class="ico"><use href="#t-bar1"/></svg><button>板受力筋(S)</button></li>
                        <li class="leaf"><svg class="ico"><use href="#t-bar2"/></svg><button>板负筋(F)</button></li>
                        <li class="leaf last"><svg class="ico"><use href="#t-band"/></svg><button>楼层板带(H)</button></li>
                        <li class="branch open"><svg class="ico"><use href="#t-open"/></svg><button>基础</button></li>
                        <li class="leaf"><svg class="ico"><use href="#t-fbeam"/></svg><button>基础梁(F)</button></li>
                        <li class="leaf"><svg class="ico"><use href="#t-raft"/></svg><button>筏板基础(M)</button></li>
                        <li class="leaf"><svg class="ico"><use href="#t-pit"/></svg><button>集水坑(K)</button></li>
                        <li class="leaf"><svg class="ico"><use href="#t-pier"/></svg><button>柱墩(Y)</button></li>
                        <li class="leaf"><svg class="ico"><use href="#t-bar3"/></svg><button>筏板主筋(R)</button></li>
                        <li class="leaf"><svg class="ico"><use href="#t-bar2"/></svg><button>筏板负筋(X)</button></li>
                        <li class="leaf"><svg class="ico"><use href="#t-iso"/></svg><button>独立基础(P)</button></li>
                        <li class="leaf"><svg class="ico"><use href="#t-strip"/></svg><button>条形基础(T)</button></li>
                        <li class="leaf"><svg class="ico"><use href="#t-pcap"/></svg><button>桩承台(V)</button></li>
                        <li class="leaf"><svg class="ico"><use href="#t-fbeam"/></svg><button>承台梁(F)</button></li>
                        <li class="leaf"><svg class="ico"><use href="#t-pile"/></svg><button>桩(U)</button></li>
                        <li class="leaf last"><svg class="ico"><use href="#t-band"/></svg><button>基础板带(W)</button></li>
                        <li class="branch"><svg class="ico"><use href="#t-shut"/></svg><button>其它</button></li>
                        <li class="branch open"><svg class="ico"><use href="#t-open"/></svg><button>自定义</button></li>
                        <li class="leaf"><svg class="ico"><use href="#t-pt"/></svg><button>自定义点</button></li>
                        <li class="leaf picked"><svg class="ico"><use href="#t-line"/></svg><button>自定义线(X)</button><svg class="tag"><use href="#t-tag"/></svg></li>
                        <li class="leaf"><svg class="ico"><use href="#t-face"/></svg><button>自定义面</button></li>
                        <li class="leaf last"><svg class="ico"><use href="#t-dim"/></svg><button>尺寸标注(W)</button></li>
                    </ul>
                    <div class="vscroll"><i class="chev up"></i><span class="vtrack"><i class="vthumb"></i></span><i class="chev down"></i></div>
                </div>
                <div class="hscroll"><i class="chev left"></i><span class="htrack"><i class="hthumb"></i></span><i class="chev right"></i></div>
            </div>
            <button class="side-btn">单构件输入</button>
            <button class="side-btn">报表预览</button>
        </aside>

        <section class="work">
            <div class="rows">
                <div class="row">
                    <div class="strip grip">
                        <button class="tool off"><svg class="ico"><use href="#i-del"/></svg>删除</button>
                        <i class="sep"></i>
                        <button class="tool off"><svg class="ico"><use href="#i-copy"/></svg>复制</button>
                        <button class="tool off"><svg class="ico"><use href="#i-mirror"/></svg>镜像</button>
                        <i class="sep"></i>
                        <button class="tool off"><svg class="ico"><use href="#i-move"/></svg>移动</button>
                        <button class="tool off"><svg class="ico"><use href="#i-rotate"/></svg>旋转</button>
                        <i class="sep"></i>
                        <button class="tool off"><svg class="ico"><use href="#i-extend"/></svg>延伸</button>
                        <button class="tool off"><svg class="ico"><use href="#i-trim"/></svg>修剪</button>
                        <i class="sep"></i>
                        <button class="tool off"><svg class="ico"><use href="#i-break"/></svg>打断</button>
                        <button class="tool off"><svg class="ico"><use href="#i-merge"/></svg>合并</button>
                        <button class="tool off"><svg class="ico"><use href="#i-split"/></svg>分割</button>
                        <i class="sep"></i>
                        <button class="tool off"><svg class="ico"><use href="#i-align"/></svg>对齐<i class="caret"></i></button>
                        <button class="tool off"><svg class="ico"><use href="#i-offset"/></svg>偏移</button>
                        <button class="tool off"><svg class="ico"><use href="#i-stretch"/></svg>拉伸</button>
                        <i class="sep"></i>
                        <button class="tool off"><svg class="ico"><use href="#i-grip"/></svg>设置夹点</button>
                    </div>
                </div>
                <div class="row">
                    <div class="strip grip">
                        <span class="combo w58"><select aria-label="楼层"><option>第5层</option></select></span>
                        <span class="combo w70"><select aria-label="构件类型"><option>自定义</option></select></span>
                        <span class="combo w70"><select aria-label="构件种类"><option>自定义线</option></select></span>
                        <span class="combo w70"><select aria-label="构件名称"><option>ZDYX-33</option></select></span>
                        <i class="sep"></i>
                        <button class="tool"><svg class="ico"><use href="#i-prop"/></svg>属性</button>
                        <button class="tool on"><svg class="ico"><use href="#i-edit"/></svg>编辑钢筋</button>
                        <button class="tool"><svg class="ico"><use href="#i-list"/></svg>构件列表</button>
                        <button class="tool"><svg class="ico"><use href="#i-pick"/></svg>拾取构件</button>
                    </div>
                    <div class="strip grip">
                        <button class="tool"><svg class="ico"><use href="#i-ax2"/></svg>两点</button>
                        <button class="tool"><svg class="ico"><use href="#i-par"/></svg>平行</button>
                        <button class="tool"><svg class="ico"><use href="#i-angle"/></svg>点角<i class="caret wide"></i></button>
                        <button class="tool"><svg class="ico"><use href="#i-arc3"/></svg>三点辅轴<i class="caret wide"></i></button>
                        <button class="tool"><svg class="ico"><use href="#i-delax"/></svg>删除辅轴</button>
                        <button class="tool"><svg class="ico"><use href="#i-dim"/></svg>尺寸标注<i class="caret wide"></i></button>
                    </div>
                </div>
                <div class="row">
                    <div class="strip grip">
                        <button class="tool"><svg class="ico"><use href="#i-arrow"/></svg>选择<i class="caret wide"></i></button>
                        <i class="sep"></i>
                        <button class="tool"><svg class="ico"><use href="#i-line"/></svg>直线</button>
                        <button class="tool"><svg class="ico"><use href="#i-ptlen"/></svg>点加长度</button>
                        <button class="tool"><svg class="ico"><use href="#i-arc"/></svg>三点画弧<i class="caret wide"></i></button>
                        <span class="combo w58"><select aria-label="画弧方式"><option></option></select></span>
                        <button class="tool"><svg class="ico"><use href="#i-rect"/></svg>矩形</button>
                        <i class="sep"></i>
                        <button class="tool"><svg class="ico"><use href="#i-smart"/></svg>智能布置<i class="caret"></i></button>
                    </div>
                    <div class="strip grip blank"></div>
                </div>
            </div>

            <!-- 3D view -->
            <div class="canvas">
                <svg class="scene" viewBox="172 168 1193 299" preserveAspectRatio="xMidYMid slice">
                    <g shape-rendering="crispEdges">
                        <path d="M172 209.500L735 168" stroke="#800000"/>
                        <path d="M172 337.500L720 297.500M1240 260L1366 250" stroke="#f00" stroke-width="1.300"/>
                        <path d="M377 322L524 467M381 322L528 467M642 303L808 467M869 341L998 467M1326 253L1366 292" stroke="#800000"/>
                        <path d="M495 314L651 467M873 341L1002 467M1199 317L1326 440" stroke="#f00"/>
                        <!-- slab -->
                        <path d="M657 210L1094 178.500L1210 292L780 331z" fill="#737373"/>
                        <path d="M811 280L1170 253L1217 292L787 324z" fill="#7a7a7a"/>
                        <path d="M787 324L1217 292L1240 246L1247 247L1217 316L772 348z" fill="#414141"/>
                        <path d="M657 211L649 227L772 348L781 330z" fill="#4d4d4d"/>
                        <path d="M796 276L803 281L780 331L774 325z" fill="#8a8a8a" opacity=".8"/>
                        <!-- right wall -->
                        <path d="M1098 168H1160L1233 241L1164 247L1094 178z" fill="#999"/>
                        <path d="M1159 168H1168L1241 241H1233z" fill="#e6e6e6"/>
                        <path d="M1164 247L1233 241L1241 242L1238 248L1170 254z" fill="#bcbcbc"/>
                        <path d="M1170 254L1237 248L1210 292z" fill="#8b8b8b"/>
                        <path d="M1233 248L1240 248L1217 292H1210z" fill="#7f7f7f"/>
                        <path d="M1241 242L1248 247L1239 249z" fill="#6a6a6a"/>
                        <!-- rebar mesh -->
                        <path d="M653 226l30-63M666 239l30-63M678 251l30-63M691 263l30-63M702 275l30-63M713 285l30-63M724 296l30-63M736 307l30-63M748 319l30-63M761 331l30-63M773 344l8-16M677 182L797 297M672 197L787 312M664 213L783 328" fill="none" stroke="#a4958f"/>
                        <path d="M653 226.500l49-3M666 238.500l49-3M678 251l49-4M691 263l49-4M702 275.500l49-4M713 285l49-3M724 295.500l49-3M736 307.500l49-3M748 319.500l42-3M761 331l49-3M773 343.500l49-3" stroke="#b4aba6"/>
                        <path d="M675 168L657 211L780 331L803 281L687 168M683 168L664 210L787 331L811 281L696 168M657 210.500h7M803 280.500h8M780 331h7" fill="none" stroke="#fff" stroke-width="1.800"/>
                        <!-- walls at lower left -->
                        <path d="M172 406L185 418L172 421z" fill="#e6e6e6"/>
                        <path d="M220 397L266 394L288 413L236 419z" fill="#e6e6e6"/>
                        <path d="M220 397L217 406L226 417L243 417z" fill="#888"/>
                        <path d="M172 422.500L333 411L347 426L172 439z" fill="#adadad"/>
                        <path d="M172 439L347 426L328 467H172z" fill="#646464"/>
                        <path d="M358 417L409 467H335z" fill="#737373"/>
                        <path d="M358 417L379 416L430 467H409z" fill="#adadad"/>
                        <path d="M1280 444L1366 438V467H1304z" fill="#00e600"/>
                        <path d="M1280 444L1304 467H1270z" fill="#009900"/>
                    </g>
                    <g fill="none" stroke="#808080">
                        <circle cx="768.500" cy="317.500" r="133"/>
                        <circle cx="768.500" cy="184.500" r="8"/><circle cx="768.500" cy="450.500" r="8"/>
                        <circle cx="635.500" cy="317.500" r="8"/><circle cx="901.500" cy="317.500" r="8"/>
                    </g>
                    <!-- axis bubbles -->
                    <g fill="none" stroke="#007c00"><circle cx="638" cy="454" r="12.500"/><circle cx="988.500" cy="454" r="12.500"/><circle cx="1352" cy="251" r="12.500"/></g>
                    <g class="bubble" text-anchor="middle"><text x="638" y="459">4</text><text x="989" y="459">3</text><text x="1352" y="256">A1</text></g>
                    <!-- axis tripod -->
                    <path d="M228 417L242 386" stroke="#0080ff" stroke-width="4"/><path d="M246 376L247 390L237 386z" fill="#0080ff"/>
                    <path d="M228 417L202 419" stroke="#f00" stroke-width="4"/><path d="M192 419L204 414V424z" fill="#f00"/>
                    <path d="M228 418L250 439" stroke="#0f0" stroke-width="3"/><path d="M256 446L246 442L252 434z" fill="#0f0"/>
                    <path d="M248 371.500h9l-9 9.500h9" fill="none" stroke="#0080ff"/>
                    <path d="M202 424l9 9M211 424l-9 9" stroke="#f00"/>
                    <path d="M238 437l4 4 4-4M242 441v5" fill="none" stroke="#0f0"/>
                </svg>
                <form class="float-panel">
                    <div class="float-title">钢筋显示控制面板</div>
                    <div class="float-list">
                        <label><input type="checkbox" checked>水平纵筋</label>
                        <label><input type="checkbox" checked>横向钢筋</label>
                        <label><input type="checkbox" checked>显示其它图元</label>
                        <label><input type="checkbox" checked>显示详细公式</label>
                    </div>
                </form>
            </div>

            <div class="snap-row">
                <div class="strip grip">
                    <button class="tool"><svg class="ico"><use href="#i-ortho"/></svg>正交</button>
                    <button class="tool on"><svg class="ico"><use href="#i-osnap"/></svg>对象捕捉</button>
                    <button class="tool on"><svg class="ico"><use href="#i-dyn"/></svg>动态输入</button>
                </div>
                <div class="strip grip">
                    <button class="tool"><svg class="ico"><use href="#i-cross"/></svg>交点</button>
                    <button class="tool on"><svg class="ico"><use href="#i-perp"/></svg>垂点</button>
                    <button class="tool on"><svg class="ico"><use href="#i-mid"/></svg>中点</button>
                    <button class="tool"><svg class="ico"><use href="#i-vert"/></svg>顶点</button>
                    <button class="tool"><svg class="ico"><use href="#i-coord"/></svg>坐标</button>
                </div>
                <div class="strip grip offsets">
                    <span class="combo w58"><select aria-label="偏移方式"><option>不偏移</option></select></span>
                    <i class="sep"></i>
                    <label for="offX">X=</label><span class="spin"><input id="offX" value="0"></span><span class="unit">mm</span>
                    <label for="offY">Y=</label><span class="spin"><input id="offY" value="0"></span><span class="unit">mm</span>
                    <i class="sep"></i>
                    <input type="checkbox" id="rot"><label for="rot" class="rot-label">旋转</label>
                    <span class="spin big"><input aria-label="旋转角度" value="0.000"></span><span class="unit">°</span>
                </div>
            </div>

            <div class="rebar">
                <div class="rebar-side"><button class="rebar-x" aria-label="关闭"><svg viewBox="0 0 10 10"><path d="M.5.5h9v9h-9z" fill="#fff" stroke="#333"/><path d="M2 3l5 5M7 3L2 8M0 0l3 3M10 0v4" stroke="#222" stroke-width="1.400"/></svg></button></div>
                <div class="rebar-body">
                    <div class="strip rebar-tools">
                        <button class="tool nav" aria-label="首行"><svg class="ico"><use href="#i-first"/></svg></button>
                        <button class="tool nav" aria-label="上一行"><svg class="ico"><use href="#i-prev"/></svg></button>
                        <button class="tool nav" aria-label="下一行"><svg class="ico"><use href="#i-next"/></svg></button>
                        <button class="tool nav" aria-label="末行"><svg class="ico"><use href="#i-last"/></svg></button>
                        <i class="sep"></i>
                        <button class="tool nav" aria-label="上移"><svg class="ico"><use href="#i-up"/></svg></button>
                        <button class="tool nav" aria-label="下移"><svg class="ico"><use href="#i-down"/></svg></button>
                        <i class="sep"></i>
                        <button class="tool off"><svg class="ico"><use href="#i-ins"/></svg>插入</button>
                        <button class="tool off"><svg class="ico"><use href="#i-rowdel"/></svg>删除</button>
                        <button class="tool off"><svg class="ico"><use href="#i-scale"/></svg>缩尺配筋</button>
                        <button class="tool"><svg class="ico"><use href="#i-info"/></svg>钢筋信息</button>
                        <button class="tool"><svg class="ico"><use href="#i-lib"/></svg>钢筋图库</button>
                        <button class="tool"><svg class="ico"><use href="#i-other"/></svg>其他<i class="caret"></i></button>
                        <button class="tool">关闭</button>
                        <i class="sep"></i>
                        <span class="total">单构件钢筋总重(kg) : 7.253</span>
                    </div>
                    <div class="grid-box">
                        <div class="grid-view">
                            <table class="grid">
                                <colgroup><col class="c33"><col class="c73"><col class="c56"><col class="c36"><col class="c33"><col class="c201"><col class="c166"><col class="c156"><col class="c61"><col class="c177"><col class="c39"><col class="c49"><col class="c61"><col class="c61"></colgroup>
                                <thead>
                                    <tr><th></th><th class="cur frozen">筋号</th><th>直径(mm)</th><th>级别</th><th>图号</th><th>图形</th><th>计算公式</th><th>公式描述</th><th>长度(mm)</th><th>根数</th><th>搭接</th><th>损耗(%)</th><th>单重(kg)</th><th>总重(kg)</th></tr>
                                </thead>
                                <tbody>
                                    <tr class="tall filled">
                                        <th class="cur">1*</th><td class="active frozen">横向钢筋.1</td><td class="num">8</td>
                                        <td class="mid"><svg class="grade" viewBox="0 0 10 10"><path d="M5 0v10M3 1.500v7M7 1.500v7M3 8.500h4M.5 6.500h9M.5 3.500v3M9.500 3.500v3M.5 3.500h9" fill="none" stroke="#222"/></svg></td>
                                        <td class="num">0</td>
                                        <td class="mid"><svg class="shape" viewBox="0 0 200 60"><path d="M92 5h-5v42h37" fill="none" stroke="#000" stroke-width="2"/><text x="97" y="13">65</text><text x="97" y="59">505</text><text transform="translate(74 7) rotate(90)">570</text></svg></td>
                                        <td class="num">1142</td><td>净长</td><td class="num">1142</td><td class="num">11</td><td class="num">0</td><td class="num">0</td><td class="num">0.451</td><td class="num">4.962</td>
                                    </tr>
                                    <tr class="med filled">
                                        <th>2</th><td class="frozen">水平纵筋.1</td><td class="num">8</td>
                                        <td class="mid"><svg class="grade" viewBox="0 0 10 10"><path d="M5 0v10M3 1.500v7M7 1.500v7M3 8.500h4M.5 6.500h9M.5 3.500v3M9.500 3.500v3M.5 3.500h9" fill="none" stroke="#222"/></svg></td>
                                        <td class="num">1</td>
                                        <td class="mid"><svg class="shape" viewBox="0 0 200 28"><path d="M23 19h150" stroke="#000" stroke-width="2"/><text x="90" y="16" class="red">1450</text></svg></td>
                                        <td class="num">1450</td><td>净长</td><td class="num">1450</td><td class="num">4</td><td class="num">0</td><td class="num">0</td><td class="num">0.573</td><td class="num">2.291</td>
                                    </tr>
                                    <tr class="low"><th>3</th><td class="frozen"></td><td></td><td></td><td></td><td></td><td></td><td></td><td></td><td></td><td></td><td></td><td></td><td></td></tr>
                                </tbody>
                            </table>
                        </div>
                        <div class="hscroll"><i class="chev left"></i><span class="htrack"><i class="hthumb wide-thumb"></i></span><i class="chev right"></i></div>
                    </div>
                </div>
            </div>
        </section>
    </div>

    <footer class="status">
        <span class="cell s148">X=3887 Y=-1114</span><span class="cell s78">层高:2.8m</span><span class="cell s98">底标高:13.07m</span><span class="cell s48">1(2)</span><span class="cell grow"></span><span class="cell s70">426.8 FPS</span>
    </footer>

    <div class="taskbar">
        <button class="start" aria-label="开始"><svg><use href="#w-win"/></svg></button>
        <div class="search">
            <i class="cortana"></i>
            <input type="text" aria-label="搜索" placeholder="在这里输入你要搜索的内容">
            <svg class="ico" viewBox="0 0 16 16"><path d="M5.500 1.500h4v8h-4zM3.500 8v4h8V8M7.500 12v3M5 15h5" fill="none" stroke="#999"/></svg>
        </div>
        <div class="tasks">
            <button class="task" aria-label="任务视图"><svg class="view"><use href="#w-view"/></svg></button>
            <button class="task" aria-label="风扇"><svg><use href="#w-fan"/></svg></button>
            <button class="task" aria-label="广联达服务"><svg><use href="#w-gg"/></svg></button>
            <button class="task pinned" aria-label="Edge"><svg><use href="#w-edge"/></svg></button>
            <button class="task" aria-label="应用商店"><svg><use href="#w-store"/></svg></button>
            <button class="task run" aria-label="资源管理器"><svg><use href="#w-exp"/></svg></button>
            <button class="task" aria-label="IE"><svg><use href="#w-ie"/></svg></button>
            <button class="task run" aria-label="广联达"><svg><use href="#w-g"/></svg></button>
            <button class="task run" aria-label="360浏览器"><svg><use href="#w-360"/></svg></button>
            <button class="task run focus" aria-label="钢筋算量"><svg><use href="#i-app"/></svg></button>
            <button class="task run" aria-label="记事"><svg><use href="#w-note"/></svg></button>
        </div>
        <div class="tray">
            <svg class="ico" viewBox="0 0 16 16"><path d="M2 11l6-6 6 6" fill="none" stroke="#fff" stroke-width="1.300"/></svg>
            <svg class="ico"><use href="#w-batt"/></svg>
            <span class="net"><svg class="ico"><use href="#w-wifi"/></svg></span>
            <svg class="ico"><use href="#w-vol"/></svg>
            <svg class="kbd"><use href="#w-kbd"/></svg>
            <span class="lang">A</span>
            <svg class="ico"><use href="#i-sogou"/></svg>
            <span class="clock">15:46<br>2017/11/2</span>
            <span class="notice"><svg><use href="#w-msg"/></svg><b>2</b></span>
        </div>
    </div>
</body>
</html>
```
FILE: styles.css
```css
:root {
    --face: #f0f0f0;
    --line: #a0a0a0;
    --accent: #0078d7;
    --hot: #dcebf7;
    --ui: "Noto Sans", "Noto Sans CJK SC", sans-serif;
    --song: "Liberation Serif", "Noto Sans CJK SC", serif;
    --cell: "Liberation Sans", "Noto Sans CJK SC", sans-serif;
}

*, *::before, *::after {
    box-sizing: border-box;
}

body {
    margin: 0;
    height: 100vh;
    display: flex;
    flex-direction: column;
    overflow: hidden;
    background: var(--face);
    color: #000;
    font: 12px/16px var(--ui);
}

button, input, select {
    font: inherit;
    color: inherit;
    border: 0;
    padding: 0;
    margin: 0;
    background: none;
    white-space: nowrap;
}

svg {
    display: block;
    flex: none;
}

i {
    flex: none;
}

.sprite {
    position: absolute;
    width: 0;
    height: 0;
}

.ico {
    width: 16px;
    height: 16px;
    flex: none;
}

/* title bar */
.title-bar {
    display: flex;
    align-items: center;
    height: 24px;
    flex: none;
    padding-left: 2px;
    background: #fff;
    position: relative;
}

.title-app {
    width: 115px;
    margin-left: 5px;
    overflow: hidden;
    white-space: nowrap;
}

.title-path {
    margin-left: 178px;
    white-space: nowrap;
}

.ime-bar {
    position: absolute;
    left: 147px;
    top: 3px;
    z-index: 2;
    width: 169px;
    height: 24px;
    display: flex;
    align-items: center;
    gap: 6px;
    padding-left: 18px;
    background: #fff;
    border: 1px solid #a9bccf;
}

.ime-logo {
    position: absolute;
    left: -15px;
    top: -4px;
    width: 28px;
    height: 28px;
}

.ime-a {
    width: 14px;
    color: #2074c8;
    font-size: 18px;
    font-weight: 600;
}

.window-buttons {
    margin-left: auto;
    padding-right: 2px;
    display: flex;
}

.window-buttons button {
    width: 46px;
    height: 20px;
    display: flex;
    align-items: center;
    justify-content: center;
}

.win-ico {
    width: 11px;
    height: 11px;
}

.speed-ball {
    position: absolute;
    right: 179px;
    top: -28px;
    z-index: 2;
    width: 48px;
    height: 48px;
    border-radius: 50%;
    border: 2px solid #e4e4e4;
    outline: 1px solid #999;
    background: linear-gradient(#2fae4d, #48d068);
    box-shadow: 0 2px 4px rgba(0, 0, 0, 0.4), inset 0 0 0 1px #1a8a3c;
    color: #fff;
    font-weight: 700;
    text-align: center;
    padding-top: 25px;
}

/* strips and tools */
.strip {
    display: flex;
    align-items: center;
    height: 26px;
    background: linear-gradient(#fafafa, #f4f4f4);
    border-radius: 2px;
}

.tool {
    display: flex;
    align-items: center;
    gap: 4px;
    height: 23px;
    padding: 0 4px;
    margin-left: -1px;
}

.tool.on {
    background: var(--hot);
    box-shadow: inset 0 0 0 1px var(--accent);
}

.off {
    color: #838383;
}

.sep {
    width: 1px;
    height: 16px;
    margin: 0 3px 0 2px;
    background: #bdbdbd;
}

.caret {
    width: 0;
    border: 3px solid transparent;
    border-top-color: #000;
    border-bottom: 0;
}

.off .caret {
    border-top-color: #838383;
}

.caret.wide {
    margin-left: 2px;
}

.sigma {
    font: 700 16px/16px var(--song);
    text-align: center;
}

.more {
    margin: -10px 6px 0 auto;
    font-size: 14px;
    font-weight: 600;
}

.grip::before {
    content: "";
    width: 2px;
    height: 14px;
    margin: 0 1px 0 2px;
    background: repeating-linear-gradient(#b8b8b8 0 2px, transparent 2px 4px);
}

/* menu */
.menu-bar {
    display: flex;
    align-items: center;
    height: 29px;
    flex: none;
    padding-left: 7px;
}

.menus {
    display: flex;
    gap: 11px;
    margin-right: 6px;
}

.news {
    flex: 1 1 187px;
    justify-content: center;
    margin-left: 2px;
    color: #0b6a6a;
    text-decoration: none;
}

.account {
    width: 240px;
    margin-left: 2px;
    padding-left: 1px;
}

.account .caret {
    margin-left: 4px;
}

.coin {
    padding: 0 8px 0 5px;
}

.top-tools {
    display: flex;
    align-items: center;
    gap: 2px;
    height: 30px;
    flex: none;
    padding-left: 3px;
}

.file-tools {
    width: 149px;
    padding-right: 2px;
}

.file-tools .more {
    margin-right: 1px;
}

.calc-tools {
    width: 550px;
}

.view-tools {
    flex: 1;
}

/* main area */
.main {
    flex: 1;
    min-height: 0;
    display: flex;
    padding-top: 1px;
}

.sidebar {
    width: 167px;
    flex: none;
    display: flex;
    flex-direction: column;
    border-right: 1px solid #fff;
}

.side-title {
    display: flex;
    align-items: center;
    gap: 5px;
    height: 16px;
    padding-right: 2px;
    background: #0054e3;
    color: #fff;
    font-size: 13px;
}

.pin {
    width: 12px;
    height: 12px;
}

.side-title .pin:first-of-type {
    margin-left: auto;
}

.side-btn {
    height: 22px;
    flex: none;
    border: 1px solid var(--line);
    border-top-color: #fff;
    box-shadow: inset 0 1px #fff;
    text-align: center;
}

.side-title + .side-btn {
    border-top-color: var(--line);
    margin-top: 1px;
}

.tree-tools {
    height: 27px;
    flex: none;
    padding: 6px 0 0 6px;
    background: #f8f8f8;
    border: 1px solid #d0d0d0;
}

.tree-tools svg {
    width: 40px;
    height: 16px;
}

.tree-box {
    flex: 1;
    min-height: 0;
    display: flex;
    flex-direction: column;
    margin: 0 1px 1px 2px;
    border: 1px solid #828790;
    background: #fff;
}

.tree-view {
    flex: 1;
    min-height: 0;
    display: flex;
    padding-right: 1px;
}

.tree {
    flex: 1;
    min-width: 0;
    margin: 0;
    padding: 1px 0 0;
    list-style: none;
    overflow: hidden;
    font-family: var(--song);
}

.tree li {
    display: flex;
    align-items: center;
    height: 16px;
}

.leaf::before {
    content: "";
    order: -2;
    width: 20px;
    height: 16px;
    margin-left: 12px;
    flex: none;
    border: 0 dotted #808080;
    border-width: 0 1px;
}

.leaf::after {
    content: "";
    order: -1;
    width: 10px;
    height: 8px;
    align-self: flex-start;
    flex: none;
    border-bottom: 1px dotted #808080;
}

.leaf.last::before {
    border-right-color: transparent;
}

.leaf.last::after {
    border-left: 1px dotted #808080;
}

.leaf button {
    padding: 0 1px 0 5px;
}

.picked button {
    background: #d9d9d9;
}

.tag {
    width: 14px;
    height: 16px;
}

.branch button {
    padding-left: 5px;
}

.branch::before {
    content: "";
    width: 8px;
    height: 8px;
    margin: 0 8px 0 7px;
    border: solid #a0a0a0;
    border-width: 2px 2px 0 0;
    transform: rotate(45deg);
}

.branch.open::before {
    border-color: #444;
    transform: rotate(135deg);
}

.vscroll {
    width: 16px;
    flex: none;
    display: flex;
    flex-direction: column;
    align-items: center;
    padding: 8px 0;
    background: var(--face);
}

.vtrack {
    flex: 1;
    width: 100%;
    display: flex;
    flex-direction: column;
    justify-content: flex-end;
    padding: 12px 0 11px;
}

.vthumb {
    height: 206px;
    background: #cdcdcd;
}

.hscroll {
    display: flex;
    align-items: center;
    height: 16px;
    flex: none;
    padding: 0 7px;
    background: var(--face);
}

.htrack {
    flex: 1;
    display: flex;
    padding: 0 4px;
}

.hthumb {
    width: 105px;
    height: 15px;
    background: #cdcdcd;
}

.tree-box .hscroll {
    margin: 0 17px 1px 0;
}

.tree-box .htrack {
    padding: 0 3px;
}

.wide-thumb {
    width: 61%;
}

.chev {
    width: 7px;
    height: 7px;
    border: solid #505050;
    border-width: 2px 2px 0 0;
}

.chev.up { transform: rotate(-45deg); }
.chev.down { transform: rotate(135deg); }
.chev.left { transform: rotate(-135deg); }
.chev.right { transform: rotate(45deg); }

/* work area */
.work {
    flex: 1;
    min-width: 0;
    display: flex;
    flex-direction: column;
    padding-left: 5px;
}

.rows {
    display: flex;
    flex-direction: column;
    gap: 3px;
    padding: 0 0 3px 3px;
}

.row {
    display: flex;
    gap: 2px;
}

.row .strip {
    height: 25px;
    padding-right: 1px;
}

.blank {
    width: 28px;
}

.combo {
    position: relative;
    display: block;
    height: 24px;
    margin-right: 2px;
    background: #fff;
}

.combo::after {
    content: "";
    position: absolute;
    right: 4px;
    top: 11px;
    border: 3px solid transparent;
    border-top-color: #000;
    border-bottom: 0;
    pointer-events: none;
}

.combo select {
    width: 100%;
    height: 24px;
    padding: 0 12px 0 3px;
    appearance: none;
}

.w58 { width: 58px; }
.w70 { width: 70px; }

.canvas {
    flex: 1;
    min-height: 0;
    position: relative;
    margin-right: 1px;
    background: #000;
}

.scene {
    position: absolute;
    width: 100%;
    height: 100%;
}

.bubble {
    font: 14px "Liberation Sans", sans-serif;
    fill: #ddd;
}

/* floating display panel */
.float-panel {
    position: absolute;
    left: 8px;
    top: 3px;
    width: 166px;
    height: 178px;
    display: flex;
    flex-direction: column;
    background: #fff;
    border: 1px solid #333;
}

.float-title {
    height: 30px;
    padding: 6px 7px 0;
    color: #8c8c8c;
}

.float-list {
    flex: 1;
    padding: 1px 3px;
    border: 1px solid #828790;
}

.float-list label {
    display: flex;
    align-items: center;
    gap: 4px;
    height: 12px;
    line-height: 12px;
}

input[type="checkbox"] {
    width: 11px;
    height: 11px;
    flex: none;
    appearance: none;
    background: #fff;
    border: 1px solid #8c8c8c;
}

input[type="checkbox"]:checked::before {
    content: "";
    display: block;
    width: 8px;
    height: 5px;
    margin: 1px;
    border: solid #444;
    border-width: 0 0 1px 1px;
    transform: rotate(-45deg);
}

.snap-row {
    display: flex;
    align-items: center;
    gap: 5px;
    height: 31px;
    flex: none;
    padding-left: 3px;
}

.offsets {
    color: #777;
    font-size: 13px;
    padding-right: 4px;
}

.offsets .combo {
    color: #000;
    font-size: 12px;
}

.spin {
    position: relative;
    width: 58px;
    height: 23px;
    margin: 0 2px;
    border: 1px solid #7a7a7a;
}

.spin.big {
    width: 69px;
}

.spin input {
    width: 100%;
    height: 21px;
    padding-right: 18px;
    text-align: right;
    font-size: 12px;
}

.spin::before, .spin::after {
    content: "";
    position: absolute;
    right: 4px;
    border: 3px solid transparent;
}

.spin::before {
    top: 4px;
    border-bottom-color: #555;
    border-top: 0;
}

.spin::after {
    bottom: 4px;
    border-top-color: #555;
    border-bottom: 0;
}

.unit {
    margin-right: 3px;
}

.rot-label {
    color: #000;
    font-size: 12px;
    padding: 0 2px 0 8px;
}

/* rebar panel */
.rebar {
    display: flex;
    height: 208px;
    flex: none;
}

.rebar-side {
    width: 12px;
    flex: none;
    display: flex;
    flex-direction: column;
    align-items: center;
    padding-top: 3px;
}

.rebar-side::after {
    content: "";
    flex: 1;
    width: 7px;
    margin: 4px 0;
    background: radial-gradient(circle at 1px 1px, #a8a8a8 1px, transparent 1px) 0 0 / 4px 4px;
}

.rebar-x svg {
    width: 10px;
    height: 10px;
}

.rebar-body {
    flex: 1;
    min-width: 0;
    display: flex;
    flex-direction: column;
    padding-right: 1px;
}

.rebar-tools {
    height: 27px;
    margin-top: 2px;
}

.tool.nav {
    padding: 0 5px 0 4px;
}

.total {
    padding-left: 3px;
}

.grid-box {
    flex: 1;
    display: flex;
    flex-direction: column;
    border: 1px solid var(--line);
    background: #fff;
}

.grid-view {
    flex: 1;
    overflow: hidden;
    margin-right: 2px;
}

.grid {
    width: 1202px;
    table-layout: fixed;
    border-collapse: collapse;
    font-family: var(--song);
}

.grid th, .grid td {
    padding: 0 2px;
    border: solid #c0c0c0;
    border-width: 0 1px 1px 0;
    font-weight: 400;
    text-align: left;
    white-space: nowrap;
    overflow: hidden;
}

.grid th {
    padding: 0;
    text-align: center;
    background: linear-gradient(#fff, #f0f0f0);
}

.grid thead th {
    height: 19px;
}

.grid td.num {
    font: 11px/16px var(--cell);
}

.grid tbody th {
    font: 11px/16px var(--cell);
}

.grid .mid {
    padding: 0;
}

.grid .frozen {
    border-right-color: #000;
}

.grid thead .cur {
    background: linear-gradient(#fad494, #f2bc5c);
    color: #60005c;
}

.grid thead .frozen {
    border-right-color: #c0c0c0;
}

.grid tbody .cur {
    background: #ffd48c;
    color: #60005c;
    font-weight: 700;
}

.tall { height: 61px; }
.med { height: 29px; }
.low { height: 19px; }

.filled td {
    background: #ccffda;
}

.filled td.active {
    background: #aeead9;
}

.c33 { width: 33px; }
.c36 { width: 36px; }
.c39 { width: 39px; }
.c49 { width: 49px; }
.c56 { width: 56px; }
.c61 { width: 61px; }
.c73 { width: 73px; }
.c156 { width: 156px; }
.c166 { width: 166px; }
.c177 { width: 177px; }
.c201 { width: 201px; }

.grade {
    width: 10px;
    height: 10px;
    margin: 0 auto;
}

.shape {
    width: 200px;
    font: 11px var(--cell);
}

.tall .shape { height: 60px; }
.med .shape { height: 28px; }

.red {
    fill: #f00;
}

.grid-box .hscroll {
    margin: 0 1px 1px;
    padding: 0 6px;
}

/* status bar */
.status {
    display: flex;
    gap: 2px;
    height: 22px;
    flex: none;
    padding-top: 2px;
    font-family: var(--song);
}

.cell {
    border: 1px solid #d4d4d4;
    background: linear-gradient(#fff, #f2f2f2);
    padding: 1px;
    white-space: nowrap;
}

.s48 { width: 48px; }
.s70 { width: 70px; }
.s78 { width: 78px; }
.s98 { width: 98px; }
.s148 { width: 148px; }
.grow { flex: 1; }

/* taskbar */
.taskbar {
    display: flex;
    height: 40px;
    flex: none;
    background: #020a0d;
    color: #fff;
}

.start {
    width: 48px;
    display: flex;
    align-items: center;
    justify-content: center;
    background: #000;
}

.start svg {
    width: 16px;
    height: 16px;
}

.search {
    width: 344px;
    display: flex;
    align-items: center;
    padding: 0 12px 0 9px;
    background: #333;
}

.cortana {
    width: 21px;
    height: 21px;
    border: 3px solid #f4f4f4;
    border-radius: 50%;
}

.search input {
    flex: 1;
    margin-left: 6px;
    font-size: 14px;
}

.search input::placeholder {
    color: #8c8c8c;
    opacity: 1;
}

.tasks {
    display: flex;
}

.task {
    width: 49px;
    display: flex;
    align-items: center;
    justify-content: center;
    border-bottom: 2px solid transparent;
}

.task svg {
    width: 24px;
    height: 24px;
}

.task .view {
    width: 22px;
    height: 16px;
}

.pinned {
    margin-left: 5px;
}

.run {
    background: linear-gradient(#76b9ed, #76b9ed) center bottom / 40px 2px no-repeat border-box;
}

.focus {
    background: #333d42;
    border-bottom-color: #76b9ed;
}

.tray {
    flex: 1;
    display: flex;
    align-items: center;
    justify-content: flex-end;
    gap: 8px;
    border-right: 1px solid #555;
    margin-right: 4px;
}

.net {
    width: 24px;
    height: 40px;
    display: flex;
    align-items: center;
    justify-content: center;
    background: #1e2529;
    margin: 0 -4px;
}

.kbd {
    width: 24px;
    height: 14px;
}

.lang {
    width: 16px;
    text-align: center;
    font-size: 16px;
    font-weight: 600;
}

.clock {
    width: 64px;
    margin-left: 8px;
    text-align: center;
    line-height: 19px;
}

.notice {
    position: relative;
    margin: 0 10px 0 6px;
}

.notice svg {
    width: 28px;
    height: 28px;
}

.notice b {
    position: absolute;
    right: 6px;
    bottom: 1px;
}
```
